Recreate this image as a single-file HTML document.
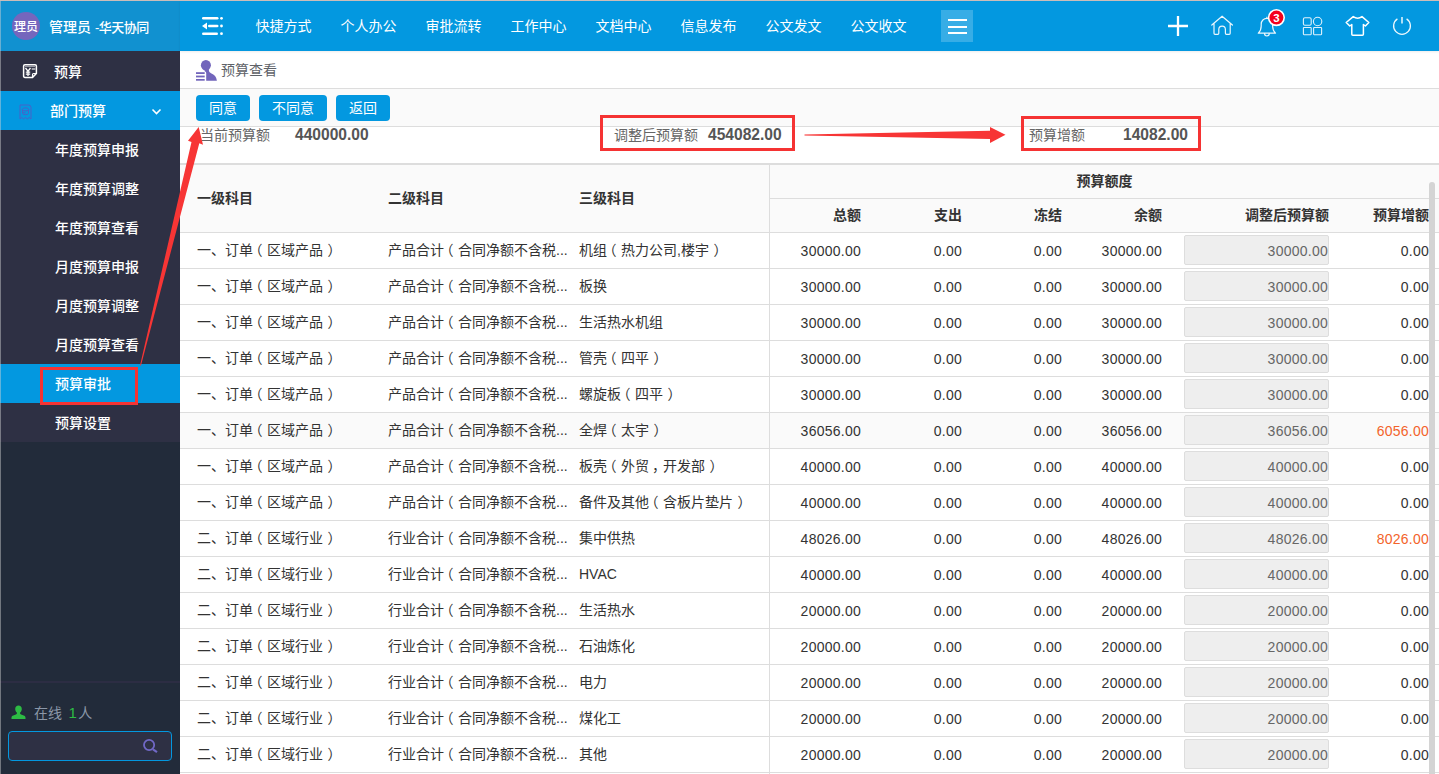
<!DOCTYPE html>
<html lang="zh-CN">
<head>
<meta charset="utf-8">
<title>预算查看</title>
<style>
*{box-sizing:border-box;margin:0;padding:0}
html,body{width:1439px;height:774px;overflow:hidden;background:#fff}
body{font-family:"Liberation Sans","Noto Sans CJK SC",sans-serif;font-size:14px;color:#333;position:relative}
.abs{position:absolute}
#topline{left:0;top:0;width:1439px;height:1px;background:#ccbdb9;z-index:50}
#leftline{left:0;top:1px;width:1px;height:773px;background:rgba(212,212,212,.45);z-index:50}
/* sidebar */
#side{left:0;top:1px;width:180px;height:773px;background:#222b3a}
#user{left:0;top:0;width:180px;height:50px;background:#1191d0}
#avatar{left:12px;top:11px;width:28px;height:28px;border-radius:50%;background:#7566bd;color:#fff;font-size:12px;font-weight:500;line-height:30px;text-align:center;overflow:hidden;white-space:nowrap;letter-spacing:0}
#uname{left:49px;top:1px;line-height:50px;color:#fff;font-size:14px;white-space:nowrap;font-weight:500}
#uname small{font-size:13px;letter-spacing:-.500px;margin-left:0}
.m1{left:0;width:180px;height:40px;color:#fff;font-size:14px;font-weight:500}
.m1 span{position:absolute;left:54px;top:1px;line-height:40px}
.sub{left:0;width:180px;height:39px;background:#2e3044;color:#fff;font-size:14px;font-weight:500;line-height:41px;padding-left:55px;white-space:nowrap;overflow:hidden}
.sub.act{background:#0398e0}
#sepline{left:0;top:680px;width:180px;height:2px;background:#2c2d43}
#online{left:34px;top:703px;font-size:14px;color:#8b97a8;line-height:18px;white-space:nowrap}
#online b{color:#2dbb44;font-weight:normal;font-size:15px;margin:0 1.500px 0 2.500px}
#search{left:8px;top:730px;width:164px;height:30px;border:1px solid #0398e0;border-radius:4px;background:#2e3044}
/* top nav */
#nav{left:180px;top:1px;width:1259px;height:50px;background:#0398e0;box-shadow:0 1px 2px rgba(0,0,0,.08);z-index:3}
.nv{top:0;height:50px;line-height:50px;color:#fff;font-size:14px;font-weight:400;width:85px;text-align:center;white-space:nowrap}
#more{left:761px;top:9px;width:32px;height:32px;background:#37ade6}
#more i{position:absolute;left:6.500px;width:19px;height:2px;background:#fff}
/* content */
#title{left:180px;top:51px;width:1259px;height:38px;background:#fff;border-bottom:1px solid #ddd}
#title span{position:absolute;left:41px;top:0;line-height:38px;font-size:14px;color:#5e6268}
#btnbar{left:180px;top:89px;width:1259px;height:38px;background:#fafafa;border-bottom:1px solid #ddd}
.btn{top:6px;height:26px;border-radius:4px;background:#0398e0;color:#fff;font-size:14px;line-height:27px;text-align:center}
#sum{left:180px;top:127px;width:1259px;height:37px;background:#fff}
.sl{top:1px;line-height:14px;font-size:14px;color:#666;white-space:nowrap}
.sv{top:1px;line-height:14px;font-size:15.600px;color:#555;font-weight:bold;white-space:nowrap}
.redbox{border:3px solid #f53333;z-index:20}
/* table */
#tbl{left:180px;top:163px;width:1259px;height:611px;border-top:2px solid #ddd;overflow:hidden}
table{border-collapse:separate;border-spacing:0;table-layout:fixed;width:1259px}
th{background:#fafafa;font-weight:bold;font-size:14px;padding-bottom:3px;color:#333;border-bottom:1px solid #ddd;white-space:nowrap}
th.l{text-align:left;padding-left:17px;height:68px}
th.g{height:34px;text-align:center;border-left:1px solid #ddd}
th.n{height:34px;text-align:right}
td{height:36px;border-bottom:1px solid #ddd;font-size:14px;color:#333;white-space:nowrap;overflow:hidden}
td.l{text-align:left;padding-left:17px;padding-bottom:4px}
td.n,th.n{text-align:right}
td.n{letter-spacing:.25px}
tr.hov td{background:#fafafa}
.c4{padding-right:0}
td.c2{overflow:visible}
td.lat{padding-bottom:1px}
.pl{position:relative;left:-4.500px}
.pr{position:relative;left:4.500px}
.pc{position:relative;left:3px}
.inp{display:inline-block;width:145px;height:30px;line-height:30px;border:1px solid #ddd;border-radius:2px;background:#eee;color:#666;text-align:right;padding-right:0;vertical-align:middle;position:relative;top:-1px}
.or{color:#f3632a}
#vline{left:769px;top:165px;width:1px;height:609px;background:#ddd;z-index:5}
#sbar{left:1429px;top:182px;width:6px;height:592px;background:#d4d4d4;border-radius:3px 3px 0 0;z-index:30}
</style>
</head>
<body>
<div id="side" class="abs">
  <div id="user" class="abs">
    <div id="avatar" class="abs">理员</div>
    <div id="uname" class="abs">管理员 <small>-华天协同</small></div>
  </div>
  <div class="m1 abs" style="top:50px;background:#2e3044">
    <svg class="abs" style="left:22px;top:12px" width="17" height="17" viewBox="0 0 17 17"><path d="M3 1.700H13Q14.400 1.700 14.400 3.100V10.500L10.500 14.400H3Q1.600 14.400 1.600 13V3.100Q1.600 1.700 3 1.700Z" fill="none" stroke="#fff" stroke-width="1.500"/><path d="M10.500 14.400V11.500Q10.500 10.500 11.500 10.500H14.400" fill="none" stroke="#fff" stroke-width="1.200"/><path d="M3.500 5L6 8.200L8.500 5M6 8.200V13M3.800 9.200H8.200M3.800 11.200H8.200" fill="none" stroke="#fff" stroke-width="1.300"/><path d="M9.700 6H13.300" stroke="#fff" stroke-width="1.100"/><path d="M3 3.600H13" stroke="#fff" stroke-opacity=".7" stroke-width=".8"/></svg>
    <span>预算</span>
  </div>
  <div class="m1 abs" style="top:90px;height:39px;background:#0398e0">
    <svg class="abs" style="left:19px;top:13px" width="13" height="16" viewBox="0 0 13 16"><path d="M1 1h8.500q2.500 0 2.500 2.500v11.500l-1.800-1.500-1.900 1.500-1.800-1.500-1.800 1.500-1.900-1.500-1.800 1.500z" fill="none" stroke="#4862c8" stroke-width="1" stroke-linejoin="round"/><path d="M3.500 5.300q0-1.400 3-1.400t3 1.400v4q0 1.400-3 1.400t-3-1.400zM3.500 5.600q0 1.300 3 1.300t3-1.300M3.500 7.700q0 1.300 3 1.300" fill="none" stroke="#4862c8" stroke-width="1"/></svg>
    <span style="left:50px;line-height:39px">部门预算</span>
    <svg class="abs" style="left:151px;top:17px" width="11" height="8" viewBox="0 0 11 8"><path d="M1.5 1.5l4 4 4-4" fill="none" stroke="#fff" stroke-width="1.6"/></svg>
  </div>
  <div class="sub abs" style="top:129px">年度预算申报</div>
  <div class="sub abs" style="top:168px">年度预算调整</div>
  <div class="sub abs" style="top:207px">年度预算查看</div>
  <div class="sub abs" style="top:246px">月度预算申报</div>
  <div class="sub abs" style="top:285px">月度预算调整</div>
  <div class="sub abs" style="top:324px">月度预算查看</div>
  <div class="sub act abs" style="top:363px">预算审批</div>
  <div class="sub abs" style="top:402px">预算设置</div>
  <div id="sepline" class="abs"></div>
  <svg class="abs" style="left:11px;top:704px" width="15" height="15" viewBox="0 0 15 15"><path d="M7.500 0.500c2 0 3.300 1.400 3.300 3.400 0 1.500-.700 2.800-1.700 3.600v1.100c0 .5.300.8 1 1l2.600.9c1.100.4 1.800 1 1.800 2.200v1.300h-14v-1.300c0-1.200.700-1.800 1.800-2.200l2.600-.9c.7-.2 1-.5 1-1v-1.100c-1-.8-1.700-2.100-1.700-3.600 0-2 1.300-3.400 3.300-3.400z" fill="#2dbb44"/></svg>
  <div id="online" class="abs">在线 <b>1</b>人</div>
  <div id="search" class="abs">
    <svg class="abs" style="left:134px;top:7px" width="16" height="16" viewBox="0 0 16 16"><circle cx="6.100" cy="6" r="5.100" fill="none" stroke="#7168c6" stroke-width="1.800"/><path d="M10 10.300L14 13.100" stroke="#7168c6" stroke-width="2.100" stroke-linecap="butt"/></svg>
  </div>
</div>

<div id="nav" class="abs">
  <svg class="abs" style="left:21.400px;top:15px" width="23" height="20" viewBox="0 0 23 20"><g fill="#fff"><rect x="1" y="1" width="16.500" height="2.600" rx="1.300"/><rect x="7" y="8.700" width="10.500" height="2.600" rx="1.300"/><rect x="1" y="16.400" width="16" height="2.600" rx="1.300"/><circle cx="20.500" cy="2.300" r="1.400"/><circle cx="20.500" cy="10" r="1.400"/><circle cx="20.500" cy="17.700" r="1.400"/><path d="M1 10l5-3.500v7z"/></g></svg>
  <div class="nv abs" style="left:61px">快捷方式</div>
  <div class="nv abs" style="left:146px">个人办公</div>
  <div class="nv abs" style="left:231px">审批流转</div>
  <div class="nv abs" style="left:316px">工作中心</div>
  <div class="nv abs" style="left:401px">文档中心</div>
  <div class="nv abs" style="left:486px">信息发布</div>
  <div class="nv abs" style="left:571px">公文发文</div>
  <div class="nv abs" style="left:656px">公文收文</div>
  <div id="more" class="abs"><i style="top:9.300px"></i><i style="top:16px"></i><i style="top:22.300px"></i></div>

</div>

<div id="title" class="abs">
  <svg class="abs" style="left:15px;top:8px" width="23" height="23" viewBox="0 0 23 23"><g fill="#7265bb"><ellipse cx="10.900" cy="6.200" rx="5" ry="5.300"/><path d="M9.700 9L9.700 12.300Q11.200 12.800 11.200 14L11.200 21.700L21.900 21.700Q21.200 16.200 16 14.300Q13.800 13.400 13.800 11L13.800 9Z"/><rect x="1" y="13.200" width="8.700" height="1.800"/><rect x="1" y="16.600" width="8.700" height="1.800"/><rect x="1" y="20" width="8.700" height="1.700"/></g></svg>
  <span>预算查看</span>
</div>
<div id="btnbar" class="abs">
  <div class="btn abs" style="left:16px;width:54px">同意</div>
  <div class="btn abs" style="left:79px;width:68px">不同意</div>
  <div class="btn abs" style="left:156px;width:54px">返回</div>
</div>
<div id="sum" class="abs">
  <div class="sl abs" style="left:20px">当前预算额</div>
  <div class="sv abs" style="left:115px">440000.00</div>
  <div class="sl abs" style="left:434px">调整后预算额</div>
  <div class="sv abs" style="left:528px">454082.00</div>
  <div class="sl abs" style="left:849px">预算增额</div>
  <div class="sv abs" style="left:943px">14082.00</div>
</div>

<div id="tbl" class="abs">
<table>
<colgroup><col style="width:191px"><col style="width:191px"><col style="width:207px"><col style="width:92px"><col style="width:101px"><col style="width:100px"><col style="width:100px"><col style="width:167px"><col style="width:100px"><col></colgroup>
<thead>
<tr><th class="l" rowspan="2">一级科目</th><th class="l" rowspan="2">二级科目</th><th class="l" rowspan="2">三级科目</th><th class="g" colspan="7">预算额度</th></tr>
<tr><th class="n" style="border-left:1px solid #ddd">总额</th><th class="n">支出</th><th class="n">冻结</th><th class="n">余额</th><th class="n">调整后预算额</th><th class="n">预算增额</th><th></th></tr>
</thead>
<tbody>
<tr><td class="l c1">一、订单<span class="pl">（</span>区域产品<span class="pr">）</span></td><td class="l c2">产品合计<span class="pl">（</span>合同净额不含税...</td><td class="l c3">机组<span class="pl">（</span>热力公司,楼宇<span class="pr">）</span></td><td class="n c4">30000.00</td><td class="n c5">0.00</td><td class="n c6">0.00</td><td class="n c7">30000.00</td><td class="n c8"><span class="inp">30000.00</span></td><td class="n c9">0.00</td><td></td></tr>
<tr><td class="l c1">一、订单<span class="pl">（</span>区域产品<span class="pr">）</span></td><td class="l c2">产品合计<span class="pl">（</span>合同净额不含税...</td><td class="l c3">板换</td><td class="n c4">30000.00</td><td class="n c5">0.00</td><td class="n c6">0.00</td><td class="n c7">30000.00</td><td class="n c8"><span class="inp">30000.00</span></td><td class="n c9">0.00</td><td></td></tr>
<tr><td class="l c1">一、订单<span class="pl">（</span>区域产品<span class="pr">）</span></td><td class="l c2">产品合计<span class="pl">（</span>合同净额不含税...</td><td class="l c3">生活热水机组</td><td class="n c4">30000.00</td><td class="n c5">0.00</td><td class="n c6">0.00</td><td class="n c7">30000.00</td><td class="n c8"><span class="inp">30000.00</span></td><td class="n c9">0.00</td><td></td></tr>
<tr><td class="l c1">一、订单<span class="pl">（</span>区域产品<span class="pr">）</span></td><td class="l c2">产品合计<span class="pl">（</span>合同净额不含税...</td><td class="l c3">管壳<span class="pl">（</span>四平<span class="pr">）</span></td><td class="n c4">30000.00</td><td class="n c5">0.00</td><td class="n c6">0.00</td><td class="n c7">30000.00</td><td class="n c8"><span class="inp">30000.00</span></td><td class="n c9">0.00</td><td></td></tr>
<tr><td class="l c1">一、订单<span class="pl">（</span>区域产品<span class="pr">）</span></td><td class="l c2">产品合计<span class="pl">（</span>合同净额不含税...</td><td class="l c3">螺旋板<span class="pl">（</span>四平<span class="pr">）</span></td><td class="n c4">30000.00</td><td class="n c5">0.00</td><td class="n c6">0.00</td><td class="n c7">30000.00</td><td class="n c8"><span class="inp">30000.00</span></td><td class="n c9">0.00</td><td></td></tr>
<tr class="hov"><td class="l c1">一、订单<span class="pl">（</span>区域产品<span class="pr">）</span></td><td class="l c2">产品合计<span class="pl">（</span>合同净额不含税...</td><td class="l c3">全焊<span class="pl">（</span>太宇<span class="pr">）</span></td><td class="n c4">36056.00</td><td class="n c5">0.00</td><td class="n c6">0.00</td><td class="n c7">36056.00</td><td class="n c8"><span class="inp">36056.00</span></td><td class="n c9 or">6056.00</td><td></td></tr>
<tr><td class="l c1">一、订单<span class="pl">（</span>区域产品<span class="pr">）</span></td><td class="l c2">产品合计<span class="pl">（</span>合同净额不含税...</td><td class="l c3">板壳<span class="pl">（</span>外贸<span class="pc">，</span>开发部<span class="pr">）</span></td><td class="n c4">40000.00</td><td class="n c5">0.00</td><td class="n c6">0.00</td><td class="n c7">40000.00</td><td class="n c8"><span class="inp">40000.00</span></td><td class="n c9">0.00</td><td></td></tr>
<tr><td class="l c1">一、订单<span class="pl">（</span>区域产品<span class="pr">）</span></td><td class="l c2">产品合计<span class="pl">（</span>合同净额不含税...</td><td class="l c3">备件及其他<span class="pl">（</span>含板片垫片<span class="pr">）</span></td><td class="n c4">40000.00</td><td class="n c5">0.00</td><td class="n c6">0.00</td><td class="n c7">40000.00</td><td class="n c8"><span class="inp">40000.00</span></td><td class="n c9">0.00</td><td></td></tr>
<tr><td class="l c1">二、订单<span class="pl">（</span>区域行业<span class="pr">）</span></td><td class="l c2">行业合计<span class="pl">（</span>合同净额不含税...</td><td class="l c3">集中供热</td><td class="n c4">48026.00</td><td class="n c5">0.00</td><td class="n c6">0.00</td><td class="n c7">48026.00</td><td class="n c8"><span class="inp">48026.00</span></td><td class="n c9 or">8026.00</td><td></td></tr>
<tr><td class="l c1">二、订单<span class="pl">（</span>区域行业<span class="pr">）</span></td><td class="l c2">行业合计<span class="pl">（</span>合同净额不含税...</td><td class="l c3 lat">HVAC</td><td class="n c4">40000.00</td><td class="n c5">0.00</td><td class="n c6">0.00</td><td class="n c7">40000.00</td><td class="n c8"><span class="inp">40000.00</span></td><td class="n c9">0.00</td><td></td></tr>
<tr><td class="l c1">二、订单<span class="pl">（</span>区域行业<span class="pr">）</span></td><td class="l c2">行业合计<span class="pl">（</span>合同净额不含税...</td><td class="l c3">生活热水</td><td class="n c4">20000.00</td><td class="n c5">0.00</td><td class="n c6">0.00</td><td class="n c7">20000.00</td><td class="n c8"><span class="inp">20000.00</span></td><td class="n c9">0.00</td><td></td></tr>
<tr><td class="l c1">二、订单<span class="pl">（</span>区域行业<span class="pr">）</span></td><td class="l c2">行业合计<span class="pl">（</span>合同净额不含税...</td><td class="l c3">石油炼化</td><td class="n c4">20000.00</td><td class="n c5">0.00</td><td class="n c6">0.00</td><td class="n c7">20000.00</td><td class="n c8"><span class="inp">20000.00</span></td><td class="n c9">0.00</td><td></td></tr>
<tr><td class="l c1">二、订单<span class="pl">（</span>区域行业<span class="pr">）</span></td><td class="l c2">行业合计<span class="pl">（</span>合同净额不含税...</td><td class="l c3">电力</td><td class="n c4">20000.00</td><td class="n c5">0.00</td><td class="n c6">0.00</td><td class="n c7">20000.00</td><td class="n c8"><span class="inp">20000.00</span></td><td class="n c9">0.00</td><td></td></tr>
<tr><td class="l c1">二、订单<span class="pl">（</span>区域行业<span class="pr">）</span></td><td class="l c2">行业合计<span class="pl">（</span>合同净额不含税...</td><td class="l c3">煤化工</td><td class="n c4">20000.00</td><td class="n c5">0.00</td><td class="n c6">0.00</td><td class="n c7">20000.00</td><td class="n c8"><span class="inp">20000.00</span></td><td class="n c9">0.00</td><td></td></tr>
<tr><td class="l c1">二、订单<span class="pl">（</span>区域行业<span class="pr">）</span></td><td class="l c2">行业合计<span class="pl">（</span>合同净额不含税...</td><td class="l c3">其他</td><td class="n c4">20000.00</td><td class="n c5">0.00</td><td class="n c6">0.00</td><td class="n c7">20000.00</td><td class="n c8"><span class="inp">20000.00</span></td><td class="n c9">0.00</td><td></td></tr>
</tbody>
</table>
</div>
<div id="vline" class="abs"></div>
<div id="sbar" class="abs"></div>

<svg class="abs" style="left:0;top:0;z-index:10;pointer-events:none" width="1439" height="52" viewBox="0 0 1439 52">
  <path d="M1168 26H1188M1178 16V36" stroke="#fff" stroke-width="2.300" fill="none"/>
  <path d="M1211.800 25L1222.100 16.200L1232.400 25M1214 23.500V33.300q0 1 1 1H1217.800q1 0 1-1V29.500a3.300 3.300 0 0 1 6.600 0V33.300q0 1 1 1H1229.200q1 0 1-1V23.500" stroke="#fff" stroke-opacity=".92" stroke-width="1.200" fill="none" stroke-linejoin="round" stroke-linecap="round"/>
  <path d="M1258.300 33.200C1260.500 31 1261.200 29 1261.200 26V24A5.700 5.700 0 0 1 1272.600 24V26C1272.600 29 1273.300 31 1275.500 33.200ZM1264.500 33.600a2.400 2.400 0 0 0 4.800 0M1266.900 18.300V16.800" stroke="#fff" stroke-opacity=".92" stroke-width="1.200" fill="none" stroke-linejoin="round"/>
  <circle cx="1276.400" cy="17.600" r="7.800" fill="#f4001c" stroke="#fff" stroke-width="1.600"/>
  <text x="1276.400" y="21.700" font-family="Liberation Sans, sans-serif" font-size="11.500" font-weight="bold" fill="#fff" text-anchor="middle">3</text>
  <g stroke="#fff" stroke-opacity=".88" stroke-width="1.100" fill="none">
    <rect x="1303.400" y="17.700" width="7.800" height="7.500" rx="1.500"/>
    <circle cx="1317.600" cy="21.500" r="4.200"/>
    <rect x="1303.400" y="27.500" width="7.800" height="7.200" rx=".6"/>
    <rect x="1313.600" y="27.500" width="8" height="7.200" rx=".6"/>
  </g>
  <path d="M1353.200 16.600Q1357.600 19.800 1362 16.600L1368.800 22.500L1365.400 26L1363.400 24.500V34.300q0 1-1 1H1352.800q-1 0-1-1V24.500L1349.800 26L1346.200 22.500Z" stroke="#fff" stroke-width="1.500" fill="none" stroke-linejoin="round"/>
  <path d="M1397.400 18.900A8.400 8.400 0 1 0 1406.600 18.900" stroke="#fff" stroke-opacity=".92" stroke-width="1.300" fill="none"/>
  <path d="M1402 16.900V23.500" stroke="#fff" stroke-opacity=".92" stroke-width="1.500" fill="none"/>
</svg>
<!-- annotations -->
<div class="redbox abs" style="left:40px;top:367px;width:98px;height:38px"></div>
<div class="redbox abs" style="left:600px;top:115px;width:195px;height:36px"></div>
<div class="redbox abs" style="left:1021px;top:116px;width:180px;height:35px"></div>
<svg class="abs" style="left:0;top:0;z-index:25;pointer-events:none" width="1439" height="774" viewBox="0 0 1439 774">
  <path d="M140 365.500L191.500 142L188 140.800L198.700 127L203 144.800L199.300 143.300L141 365.500z" fill="#f73535"/>
  <path d="M804.500 134.600L990 130.800L990 127L1005.500 134.800L990 143L990 139L804.500 135.400z" fill="#f73535"/>
</svg>
<div id="topline" class="abs"></div>
<div id="leftline" class="abs"></div>
</body>
</html>
